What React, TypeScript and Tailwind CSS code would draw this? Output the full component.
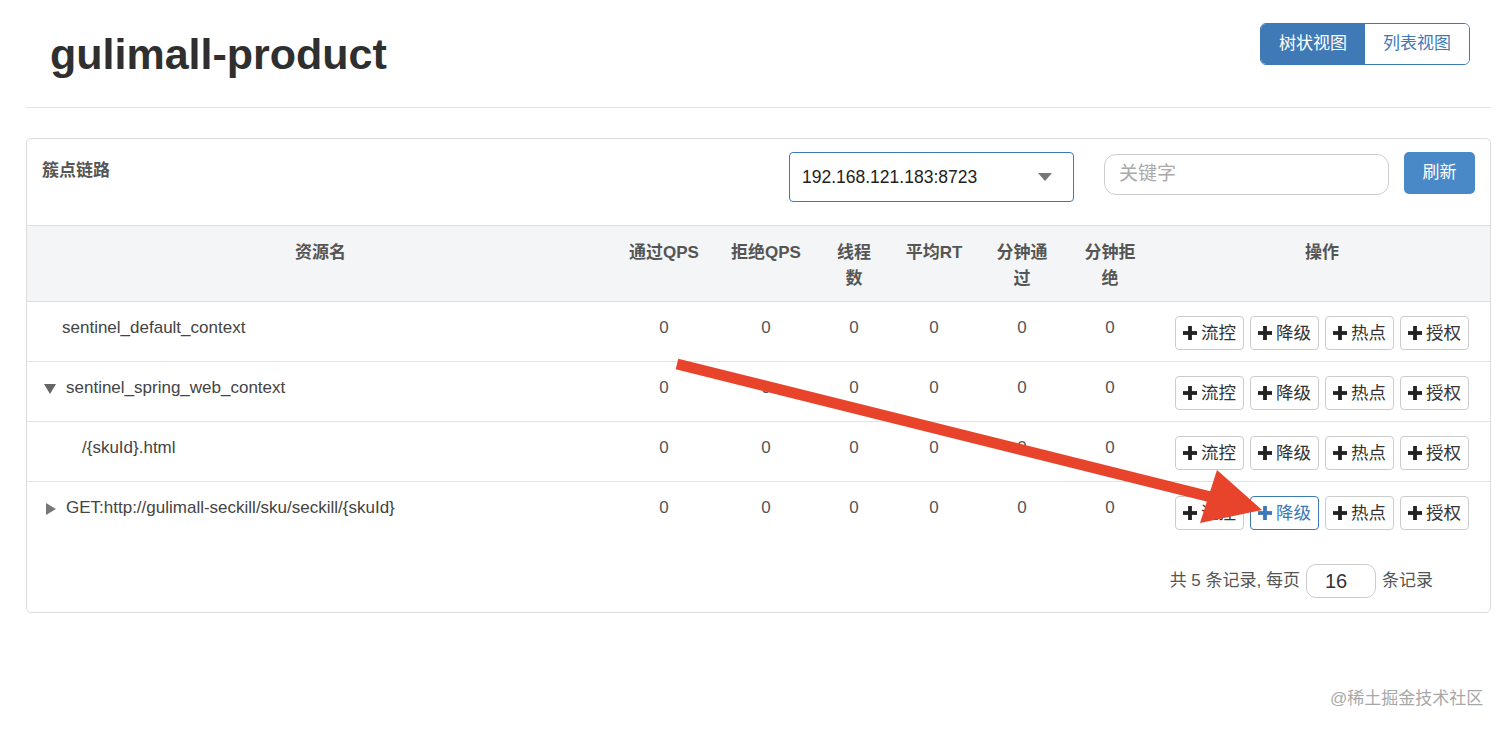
import React from 'react';

const FONT = "[font-family:'Liberation_Sans','Noto_Sans_CJK_SC',sans-serif]";

interface Row {
  name: string;
  indent: string;
  toggle?: 'open' | 'closed';
  values: number[];
  highlight?: boolean;
}

const rows: Row[] = [
  { name: 'sentinel_default_context', indent: 'pl-[35px]', values: [0, 0, 0, 0, 0, 0] },
  { name: 'sentinel_spring_web_context', indent: 'pl-[17px]', toggle: 'open', values: [0, 0, 0, 0, 0, 0] },
  { name: '/{skuId}.html', indent: 'pl-[55px]', values: [0, 0, 0, 0, 0, 0] },
  { name: 'GET:http://gulimall-seckill/sku/seckill/{skuId}', indent: 'pl-[19px]', toggle: 'closed', values: [0, 0, 0, 0, 0, 0], highlight: true },
];

const headers = [
  { label: '通过QPS', w: 'w-[100px] px-[8px]' },
  { label: '拒绝QPS', w: 'w-[104px] px-[8px]' },
  { label: '线程数', w: 'w-[72px] px-[13px]' },
  { label: '平均RT', w: 'w-[88px] px-[12px]' },
  { label: '分钟通过', w: 'w-[88px] px-[15px]' },
  { label: '分钟拒绝', w: 'w-[88px] px-[15px]' },
];

function Plus({ className }: { className: string }) {
  return (
    <svg viewBox="0 0 14 14" className={className} fill="currentColor">
      <rect x="0" y="5.1" width="14" height="3.8" />
      <rect x="5.1" y="0" width="3.8" height="14" />
    </svg>
  );
}

function ActionButton({ label, active }: { label: string; active?: boolean }) {
  return (
    <button
      className={`flex h-[34px] items-center gap-[4px] rounded-[4px] border bg-white px-[7px] text-[17.5px] ${
        active ? 'border-[#3d79b6] text-[#3d79b6]' : 'border-[#cccccc] text-[#333]'
      }`}
    >
      <Plus className={`h-[14px] w-[14px] ${active ? 'text-[#3d79b6]' : 'text-[#222]'}`} />
      <span>{label}</span>
    </button>
  );
}

function Toggle({ kind }: { kind: 'open' | 'closed' }) {
  if (kind === 'open') {
    return (
      <svg viewBox="0 0 12 10" className="mr-[10px] mt-[8px] h-[10px] w-[12px] text-[#666]" fill="currentColor">
        <polygon points="0,0 12,0 6,10" />
      </svg>
    );
  }
  return (
    <svg viewBox="0 0 10 12" className="mr-[10px] mt-[7px] h-[12px] w-[10px] text-[#777]" fill="currentColor">
      <polygon points="0,0 10,6 0,12" />
    </svg>
  );
}

export default function App() {
  return (
    <div className={`relative min-h-screen bg-white pl-[26px] pr-[21px] pt-[23px] ${FONT}`}>
      {/* page header */}
      <div className="flex h-[85px] items-start justify-between border-b border-[#e4e4e4]">
        <h1 className="mt-[8px] pl-[24px] text-[43px] font-bold leading-[46px] text-[#2f2f2f]">
          gulimall-product
        </h1>
        <div className="mr-[21px] flex h-[42px] overflow-hidden rounded-[6px] border border-[#3f7ab6] text-[17px]">
          <button className="w-[104px] bg-[#3f7ab6] text-white">树状视图</button>
          <button className="w-[104px] bg-white text-[#3f7ab6]">列表视图</button>
        </div>
      </div>

      {/* panel */}
      <div className="mt-[30px] rounded-[5px] border border-[#dddddd]">
        <div className="flex h-[86px] items-start px-[15px] pt-[13px]">
          <div className="mt-[6px] flex-1 text-[17px] font-bold text-[#555]">簇点链路</div>
          <div className="flex h-[50px] w-[285px] items-center justify-between rounded-[4px] border border-[#3d79b6] pl-[12px] pr-[21px] text-[17.5px] text-[#222]">
            <span>192.168.121.183:8723</span>
            <svg viewBox="0 0 14 8" className="h-[8px] w-[14px] text-[#777]" fill="currentColor">
              <polygon points="0,0 14,0 7,8" />
            </svg>
          </div>
          <div className="ml-[30px] mt-[2px] flex h-[41px] w-[285px] items-center rounded-[12px] border border-[#cccccc] pl-[14px] text-[19px] text-[#aaa]">
            关键字
          </div>
          <button className="ml-[15px] h-[42px] w-[71px] rounded-[5px] bg-[#4a89c8] text-[17px] text-white">
            刷新
          </button>
        </div>

        <table className="w-full table-fixed border-collapse">
          <thead>
            <tr className="h-[76px] border-y border-[#dedede] bg-[#f3f5f7] text-[17px] font-bold text-[#555]">
              <th className="w-[587px] pt-[14px] align-top font-bold leading-[26px]">资源名</th>
              {headers.map((h) => (
                <th key={h.label} className={`${h.w} pt-[14px] align-top font-bold leading-[26px]`}>
                  {h.label}
                </th>
              ))}
              <th className="pt-[14px] align-top font-bold leading-[26px]">操作</th>
            </tr>
          </thead>
          <tbody className="text-[17px] text-[#444]">
            {rows.map((row, i) => (
              <tr key={row.name} className={`h-[60px] ${i < rows.length - 1 ? 'border-b border-[#e3e3e3]' : ''}`}>
                <td className={`${row.indent} pt-[14px] align-top leading-[24px]`}>
                  <div className="flex items-start">
                    {row.toggle && <Toggle kind={row.toggle} />}
                    <span>{row.name}</span>
                  </div>
                </td>
                {row.values.map((v, j) => (
                  <td key={j} className="pt-[14px] text-center align-top leading-[24px] text-[#555]">
                    {v}
                  </td>
                ))}
                <td className="pt-[14px] align-top">
                  <div className="flex justify-center gap-[6px]">
                    <ActionButton label="流控" />
                    <ActionButton label="降级" active={row.highlight} />
                    <ActionButton label="热点" />
                    <ActionButton label="授权" />
                  </div>
                </td>
              </tr>
            ))}
          </tbody>
        </table>

        <div className="flex items-center justify-end pb-[14px] pr-[57px] pt-[22px] text-[17px] text-[#555]">
          <span>共 5 条记录, 每页</span>
          <div className="mx-[6px] flex h-[34px] w-[70px] items-center rounded-[10px] border border-[#cccccc] pl-[18px] text-[20px] text-[#333]">
            16
          </div>
          <span>条记录</span>
        </div>
      </div>

      {/* annotation arrow drawn over the screenshot */}
      <svg className="pointer-events-none absolute left-0 top-0 h-[730px] w-[1512px]" viewBox="0 0 1512 730">
        <line x1="677" y1="364" x2="1215" y2="498" stroke="#e8432b" strokeWidth="11" />
        <polygon points="1217,470 1262,510 1200,523" fill="#e8432b" />
      </svg>

      <div className="absolute left-[1330px] top-[686px] text-[17px] text-[#a8a8a8]">@稀土掘金技术社区</div>
    </div>
  );
}
